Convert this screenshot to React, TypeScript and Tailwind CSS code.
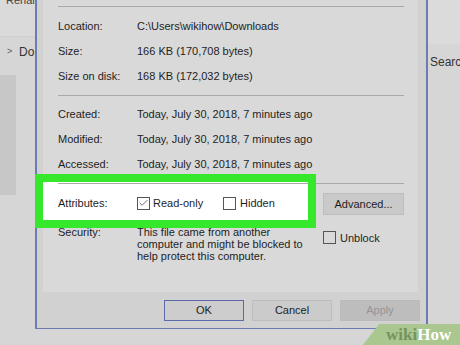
import { Check } from "lucide-react";

const Row = ({ label, value }: { label: string; value: string }) => {
  return (
    <div className="flex items-center h-[25px]">
      <div className="w-[79px] shrink-0">{label}</div>
      <div>{value}</div>
    </div>
  );
};

const Box = ({ checked }: { checked?: boolean }) => {
  return (
    <div className="w-[13px] h-[13px] border border-[#555] bg-transparent flex items-center justify-center shrink-0">
      {checked && <Check size={12} strokeWidth={1.5} className="text-[#333]" />}
    </div>
  );
};

const Btn = ({ text, focus, off }: { text: string; focus?: boolean; off?: boolean }) => {
  return (
    <div
      className={
        "h-[21px] w-[80px] flex items-center justify-center border " +
        (focus
          ? "border-[#5b6aa8] bg-[#cdcdcd] text-[#222]"
          : off
          ? "border-[#bababa] bg-[#bdbdbd] text-[#959595]"
          : "border-[#bdbdbd] bg-[#cbcbcb] text-[#222]")
      }
    >
      {text}
    </div>
  );
};

export default function App() {
  return (
    <div
      className="relative w-[460px] h-[345px] overflow-hidden bg-[#d6d6d6] flex text-[11px] text-[#1e1e1e]"
      style={{ fontFamily: "'Liberation Sans', Arial, sans-serif" }}
    >
      {/* explorer behind, left */}
      <div className="w-[35px] shrink-0 flex flex-col">
        <div className="h-[45px] bg-[#dadada] border-b border-[#cfcfcf] text-[#444] -mt-[8px] pl-[6px]">Renam</div>
        <div className="flex items-center h-[26px] mt-[2px] text-[#333] text-[12px]">
          <span className="w-[19px] pl-[7px] text-[9px] text-[#555]">&gt;</span>
          <span>Do</span>
        </div>
        <div className="w-[16px] h-[120px] mt-[10px] bg-[#c7c7c7]" />
      </div>

      {/* dialog */}
      <div className="w-[393px] h-[329px] shrink-0 bg-[#d1d1d1] border-l-2 border-r-2 border-b border-[#6d7bb3] flex flex-col">
        <div className="h-[292px] ml-[6px] mr-[8px] bg-[#d9d9d9] pt-[6px] flex flex-col">
          <div className="h-px bg-[#a9a9a9] ml-[15px] mr-[14px]" />
          <div className="pl-[15px] mt-[7px]">
            <Row label="Location:" value="C:\Users\wikihow\Downloads" />
            <Row label="Size:" value="166 KB (170,708 bytes)" />
            <Row label="Size on disk:" value="168 KB (172,032 bytes)" />
          </div>
          <div className="h-px bg-[#a9a9a9] ml-[15px] mr-[14px] mt-[6px]" />
          <div className="pl-[15px] mt-[6px]">
            <Row label="Created:" value="Today, July 30, 2018, 7 minutes ago" />
            <Row label="Modified:" value="Today, July 30, 2018, 7 minutes ago" />
            <Row label="Accessed:" value="Today, July 30, 2018, 7 minutes ago" />
          </div>

          <div className="flex items-start mt-[5px]">
            <div className="relative z-10 w-[265px] h-[38px] bg-white outline-8 outline-[#35e82c] pt-px">
              <div className="h-px w-[346px] ml-[15px] bg-[#a9a9a9]" />
              <div className="flex items-center h-[30px] mt-[4px] pl-[15px]">
                <div className="w-[79px] shrink-0">Attributes:</div>
                <Box checked />
                <span className="ml-[3px] w-[70px]">Read-only</span>
                <Box />
                <span className="ml-[4px]">Hidden</span>
              </div>
            </div>
            <div className="ml-[15px] mt-[11px] w-[81px] h-[22px] bg-[#c9c9c9] border border-[#bdbdbd] flex items-center justify-center">
              Advanced...
            </div>
          </div>

          <div className="flex mt-[6px] pl-[15px] leading-[12px]">
            <div className="w-[79px] shrink-0">Security:</div>
            <div className="w-[180px] shrink-0 whitespace-nowrap">
              This file came from another
              <br />
              computer and might be blocked to
              <br />
              help protect this computer.
            </div>
            <div className="flex items-center ml-[6px] mt-[5px] h-[13px]">
              <Box />
              <span className="ml-[4px]">Unblock</span>
            </div>
          </div>
        </div>

        <div className="flex justify-end gap-[8px] pr-[6px] mt-[8px]">
          <Btn text="OK" focus />
          <Btn text="Cancel" />
          <Btn text="Apply" off />
        </div>
      </div>

      {/* explorer behind, right */}
      <div className="flex-1 flex flex-col">
        <div className="h-[44px] bg-[#dbdbdb]" />
        <div className="pl-[2px] mt-[9px] text-[12px] text-[#333]">Search</div>
      </div>

      {/* wikiHow mark */}
      <div className="absolute right-0 bottom-0 w-[97px] h-[21px]">
        <svg width="97" height="21" className="absolute inset-0">
          <polygon points="16,0 97,0 97,21 0,21" fill="#a9c78e" />
        </svg>
        <div
          className="relative pl-[23px] text-[17px] font-bold leading-[21px]"
          style={{ fontFamily: "'Liberation Serif', 'Times New Roman', serif" }}
        >
          <span className="text-[#76935e]">wiki</span>
          <span className="text-white">How</span>
        </div>
      </div>
    </div>
  );
}
